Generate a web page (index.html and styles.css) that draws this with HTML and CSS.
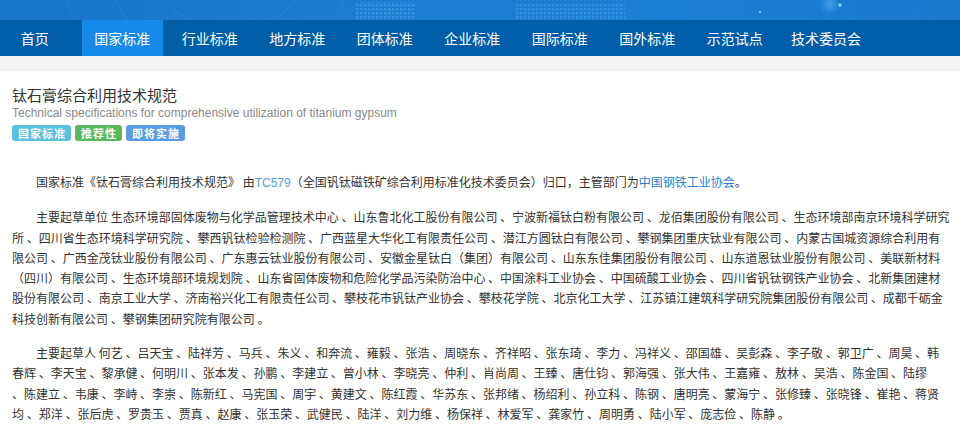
FILE: index.html
```html
<!DOCTYPE html>
<html lang="zh-CN">
<head>
    <meta charset="UTF-8">
    <meta name="viewport" content="width=device-width, initial-scale=1.0">
    <title>钛石膏综合利用技术规范</title>
    <link rel="stylesheet" href="styles.css">
</head>
<body>
    <div class="banner">
        <svg class="banner-art" width="960" height="20" viewBox="0 0 960 20">
            <defs>
                <pattern id="dots" width="4" height="4" patternUnits="userSpaceOnUse">
                    <rect width="2.4" height="2.4" fill="#4ea3ea" opacity="0.55"/>
                </pattern>
                <radialGradient id="glow" cx="0.5" cy="0.5" r="0.5">
                    <stop offset="0" stop-color="#6cc2ff" stop-opacity="0.5"/>
                    <stop offset="1" stop-color="#6cc2ff" stop-opacity="0"/>
                </radialGradient>
            </defs>
            <circle cx="230" cy="-60" r="90" fill="none" stroke="#4b9be2" stroke-opacity="0.35"/>
            <circle cx="230" cy="-60" r="130" fill="none" stroke="#4b9be2" stroke-opacity="0.25"/>
            <circle cx="230" cy="-60" r="175" fill="none" stroke="#4b9be2" stroke-opacity="0.2"/>
            <rect x="355" y="2" width="60" height="18" fill="url(#dots)"/>
            <rect x="515" y="4" width="110" height="16" fill="url(#dots)" opacity="0.8"/>
            <circle cx="880" cy="-30" r="70" fill="none" stroke="#5aa8ec" stroke-opacity="0.35" stroke-dasharray="2 3"/>
            <circle cx="880" cy="-30" r="55" fill="none" stroke="#5aa8ec" stroke-opacity="0.3" stroke-dasharray="2 3"/>
            <circle cx="830" cy="4" r="10" fill="url(#glow)"/>
            <circle cx="840" cy="5" r="1.5" fill="#9ad6ff"/>
            <circle cx="760" cy="12" r="1" fill="#9ad6ff"/>
        </svg>
    </div>

    <nav class="nav">
        <ul class="nav-list">
            <li><a href="#">首页</a></li>
            <li><a href="#" class="active">国家标准</a></li>
            <li><a href="#">行业标准</a></li>
            <li><a href="#">地方标准</a></li>
            <li><a href="#">团体标准</a></li>
            <li><a href="#">企业标准</a></li>
            <li><a href="#">国际标准</a></li>
            <li><a href="#">国外标准</a></li>
            <li><a href="#">示范试点</a></li>
            <li><a href="#">技术委员会</a></li>
        </ul>
    </nav>

    <div class="page">
        <div class="detail">
            <div class="detail-head">
                <h1 class="title">钛石膏综合利用技术规范</h1>
                <p class="title-en">Technical specifications for comprehensive utilization of titanium gypsum</p>
                <div class="labels">
                    <span class="label label-info">国家标准</span>
                    <span class="label label-success">推荐性</span>
                    <span class="label label-primary">即将实施</span>
                </div>
            </div>

            <div class="detail-body">
                <p>国家标准《钛石膏综合利用技术规范》 由<a href="#" class="link-tc">TC579</a>（全国钒钛磁铁矿综合利用标准化技术委员会）归口，主管部门为<a href="#" class="link-dept">中国钢铁工业协会</a>。</p>
                <p>主要起草单位 生态环境部固体废物与化学品管理技术中心 、山东鲁北化工股份有限公司 、宁波新福钛白粉有限公司 、龙佰集团股份有限公司 、生态环境部南京环境科学研究<br>所 、四川省生态环境科学研究院 、攀西钒钛检验检测院 、广西蓝星大华化工有限责任公司 、潜江方圆钛白有限公司 、攀钢集团重庆钛业有限公司 、内蒙古国城资源综合利用有<br>限公司 、广西金茂钛业股份有限公司 、广东惠云钛业股份有限公司 、安徽金星钛白（集团）有限公司 、山东东佳集团股份有限公司 、山东道恩钛业股份有限公司 、美联新材料<br>（四川）有限公司 、生态环境部环境规划院 、山东省固体废物和危险化学品污染防治中心 、中国涂料工业协会 、中国硫酸工业协会 、四川省钒钛钢铁产业协会 、北新集团建材<br>股份有限公司 、南京工业大学 、济南裕兴化工有限责任公司 、攀枝花市钒钛产业协会 、攀枝花学院 、北京化工大学 、江苏镇江建筑科学研究院集团股份有限公司 、成都千砺金<br>科技创新有限公司 、攀钢集团研究院有限公司 。</p>
                <p>主要起草人 何艺 、吕天宝 、陆祥芳 、马兵 、朱义 、和奔流 、雍毅 、张浩 、周晓东 、齐祥昭 、张东琦 、李力 、冯祥义 、邵国雄 、吴彭森 、李子敬 、郭卫广 、周昊 、韩<br>春辉 、李天宝 、黎承健 、何明川 、张本发 、孙鹏 、李建立 、曾小林 、李晓亮 、仲利 、肖尚周 、王臻 、唐仕钧 、郭海强 、张大伟 、王嘉雍 、敖林 、吴浩 、陈金国 、陆缪<br>、陈建立 、韦康 、李峙 、李崇 、陈新红 、马宪国 、周宇 、黄建文 、陈红霞 、华苏东 、张邦绪 、杨绍利 、孙立科 、陈钢 、唐明亮 、蒙海宁 、张修臻 、张晓锋 、崔艳 、蒋贤<br>均 、郑洋 、张后虎 、罗贵玉 、贾真 、赵康 、张玉荣 、武健民 、陆洋 、刘力维 、杨保祥 、林爱军 、龚家竹 、周明勇 、陆小军 、庞志俭 、陈静 。</p>
            </div>
        </div>
    </div>
</body>
</html>
```

FILE: styles.css
```css
body {
    margin: 0;
    padding: 0;
    font-family: "Liberation Sans", Arial, "Noto Sans CJK SC", sans-serif;
    color: #333;
    background-color: #fff;
}

.banner {
    height: 20px;
    overflow: hidden;
    background: linear-gradient(90deg, #1876cc 0%, #1c7dd3 40%, #1a7fd6 70%, #1a78cf 100%);
}

.banner-art {
    display: block;
}

.nav {
    height: 36px;
    background-color: #005ea9;
    overflow: hidden;
}

.nav-list {
    display: flex;
    list-style: none;
    margin: 0 0 0 -9px;
    padding: 0;
}

.nav-list li {
    flex: 0 0 87.5px;
    text-align: center;
}

.nav-list a {
    display: inline-block;
    padding: 0 12.5px;
    height: 36px;
    line-height: 36px;
    font-family: "Noto Sans CJK SC", sans-serif;
    font-size: 14px;
    color: #fff;
    text-decoration: none;
    white-space: nowrap;
}

.nav-list a.active {
    background-color: #158ae8;
}

.page {
    padding-top: 13px;
    background-color: #f4f4f4;
}

.detail {
    background-color: #fff;
    border-top: 1px solid #e6e6e6;
    padding: 0 12px 20px;
    min-height: 360px;
}

.detail-head {
    padding-top: 15px;
}

.title {
    margin: 0;
    font-family: "Noto Sans CJK SC", sans-serif;
    font-size: 15px;
    font-weight: normal;
    line-height: 20px;
    color: #333;
}

.title-en {
    margin: 0;
    font-size: 12px;
    line-height: 16px;
    color: #8a8a8a;
}

.labels {
    display: flex;
    gap: 4px;
    margin-top: 4px;
}

.label {
    display: inline-block;
    height: 16px;
    padding: 0 5px 0 6px;
    line-height: 16px;
    font-family: "Noto Sans CJK SC", sans-serif;
    font-size: 11px;
    font-weight: bold;
    letter-spacing: 1px;
    color: #fff;
    border-radius: 3px;
}

.label-info {
    background-color: #5bc0de;
}

.label-success {
    background-color: #5cb85c;
}

.label-primary {
    background-color: #5a9be6;
}

.detail-body {
    padding-top: 31px;
}

.detail-body p {
    margin: 0 0 14px;
    font-family: "Noto Sans CJK SC", sans-serif;
    font-size: 12px;
    line-height: 20.3px;
    text-indent: 2em;
    white-space: nowrap;
    color: #333;
}

.link-tc {
    font-family: "Liberation Sans", Arial, sans-serif;
    color: #5b9be0;
    text-decoration: none;
}

.link-dept {
    color: #2a7fcf;
    text-decoration: none;
}
```
